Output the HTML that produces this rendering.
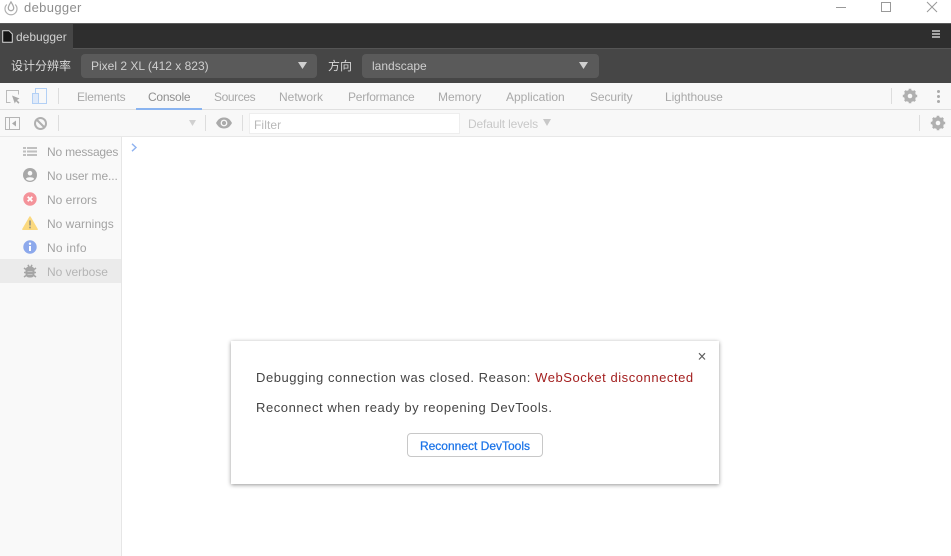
<!DOCTYPE html>
<html><head><meta charset="utf-8">
<style>
html,body{margin:0;padding:0;width:951px;height:556px;overflow:hidden;background:#fff;font-family:"Liberation Sans","Noto Sans CJK SC",sans-serif;}
div,span,svg{position:absolute;}
.t{white-space:nowrap;font-size:12px;line-height:14px;}
.tab{top:90px;color:#a9a9a9;}
.s{left:47px;color:#a3a3a3;}
.sep{width:1px;background:#ddd;}
</style></head><body>
<svg style="left:3px;top:0" width="16" height="16" viewBox="0 0 16 16"><path d="M8 2C6.500 4.300 5.300 6 5.300 8a2.700 2.700 0 0 0 5.400 0C10.700 6 9.500 4.300 8 2z" fill="none" stroke="#a8a8a8" stroke-width="1.300"/><path d="M3.800 4.500a6 6 0 1 0 8.400 0" fill="none" stroke="#b0b0b0" stroke-width="1.200"/></svg>
<div class="t" style="left:24px;top:0;font-size:13px;line-height:16px;color:#8d8d8d;letter-spacing:.35px">debugger</div>
<svg style="left:836px;top:0" width="110" height="16" viewBox="0 0 110 16"><path d="M0 7.500H10" stroke="#999" fill="none"/><rect x="45.500" y="2.500" width="9" height="9" fill="none" stroke="#999"/><path d="M91 2L101 12M101 2L91 12" stroke="#999" fill="none"/></svg>

<div style="left:0;top:23px;width:951px;height:25px;background:#2e2e2e;border-top:1px solid #5a5a5a;box-sizing:border-box"></div>
<div style="left:0;top:48px;width:951px;height:35px;background:#464646;border-top:1px solid #555;box-sizing:border-box"></div>
<div style="left:0;top:24px;width:73px;height:25px;background:#464646"></div>
<svg style="left:2px;top:30px" width="11" height="13" viewBox="0 0 11 13"><path d="M.7.700H7L10.300 4V12.300H.7Z" fill="#141414" stroke="#d5d5d5" stroke-width="1"/></svg>
<div class="t" style="left:16px;top:30px;color:#d2d2d2">debugger</div>
<svg style="left:932px;top:30px" width="9" height="9"><path d="M0 1H8M0 4H8M0 7H8" stroke="#a5a5a5" stroke-width="2"/></svg>

<div class="t" style="left:11px;top:59px;color:#d8d8d8">设计分辨率</div>
<div style="left:81px;top:54px;width:236px;height:24px;border-radius:4px;background:#5a5a5a"></div>
<div class="t" style="left:91px;top:59px;color:#cfcfcf">Pixel 2 XL (412 x 823)</div>
<svg style="left:298px;top:62px" width="10" height="8"><path d="M0 0H9L4.500 7Z" fill="#cfcfcf"/></svg>
<div class="t" style="left:328px;top:59px;color:#d8d8d8">方向</div>
<div style="left:362px;top:54px;width:237px;height:24px;border-radius:4px;background:#5a5a5a"></div>
<div class="t" style="left:372px;top:59px;color:#cfcfcf">landscape</div>
<svg style="left:579px;top:62px" width="10" height="8"><path d="M0 0H9L4.500 7Z" fill="#cfcfcf"/></svg>

<div style="left:0;top:83px;width:951px;height:27px;background:#f8f8f8;border-bottom:1px solid #e0e0e0;box-sizing:border-box"></div>
<div style="left:0;top:110px;width:951px;height:27px;background:#f8f8f8;border-bottom:1px solid #e8e8e8;box-sizing:border-box"></div>
<svg style="left:6px;top:90px" width="14" height="14" viewBox="0 0 14 14"><path d="M4.500 12.500H.5V.5H12.500V4.500" fill="none" stroke="#bbb"/><path d="M6 5.500L13.500 8.500L11 10L13.500 12.500L12.300 13.700L10 11.200L8.800 13.500Z" fill="#aaa"/></svg>
<svg style="left:32px;top:88px" width="16" height="16" viewBox="0 0 16 16"><path d="M3.500 5V.5H14.500V15.500H6.500" fill="none" stroke="#b3d0f5"/><rect x=".5" y="5.500" width="6" height="10" fill="#dfeafa" stroke="#b3d0f5"/></svg>
<div class="sep" style="left:58px;top:88px;height:16px"></div>
<div class="t tab" style="left:77px;letter-spacing:-.2px">Elements</div>
<div class="t tab" style="left:148px;color:#8f8f8f;letter-spacing:-.25px">Console</div>
<div style="left:136px;top:108px;width:66px;height:2px;background:#8ab4f0"></div>
<div class="t tab" style="left:214px;letter-spacing:-.4px">Sources</div>
<div class="t tab" style="left:279px">Network</div>
<div class="t tab" style="left:348px;letter-spacing:-.2px">Performance</div>
<div class="t tab" style="left:438px">Memory</div>
<div class="t tab" style="left:506px">Application</div>
<div class="t tab" style="left:590px;letter-spacing:-.1px">Security</div>
<div class="t tab" style="left:665px;letter-spacing:-.1px">Lighthouse</div>
<div class="sep" style="left:891px;top:88px;height:16px"></div>
<svg style="left:902px;top:88px" width="16" height="16" viewBox="0 0 16 16"><circle cx="8" cy="8" r="4.500" fill="none" stroke="#b0b0b0" stroke-width="3"/><path d="M8 .8V15.200M.8 8H15.200M2.900 2.900L13.100 13.100M13.100 2.900L2.900 13.100" stroke="#b0b0b0" stroke-width="2.600"/><circle cx="8" cy="8" r="2.300" fill="#f8f8f8"/></svg>
<svg style="left:936px;top:89px" width="5" height="15"><circle cx="2.500" cy="2.500" r="1.500" fill="#aaa"/><circle cx="2.500" cy="7.500" r="1.500" fill="#aaa"/><circle cx="2.500" cy="12.500" r="1.500" fill="#aaa"/></svg>

<svg style="left:5px;top:116px" width="15" height="15" viewBox="0 0 15 15"><rect x=".5" y="1.500" width="14" height="12" fill="none" stroke="#b5b5b5"/><path d="M4.500 1.500V13.500" stroke="#b5b5b5"/><path d="M11 4.500V10.500L7 7.500Z" fill="#aaa"/></svg>
<svg style="left:33px;top:116px" width="15" height="15" viewBox="0 0 15 15"><circle cx="7.500" cy="7.500" r="5.500" fill="none" stroke="#b0b0b0" stroke-width="2"/><path d="M3.500 3.500L11.500 11.500" stroke="#b0b0b0" stroke-width="2"/></svg>
<div class="sep" style="left:58px;top:115px;height:16px"></div>
<svg style="left:189px;top:120px" width="8" height="7"><path d="M0 0H7L3.500 6Z" fill="#d0d0d0"/></svg>
<div class="sep" style="left:205px;top:115px;height:16px"></div>
<svg style="left:216px;top:117px" width="16" height="12" viewBox="0 0 16 12"><path d="M0 6C2.500 1.500 5 .5 8 .5S13.500 1.500 16 6C13.500 10.500 11 11.500 8 11.500S2.500 10.500 0 6Z" fill="#aaa"/><circle cx="8" cy="6" r="3.400" fill="#f8f8f8"/><circle cx="8" cy="6" r="2.100" fill="#aaa"/></svg>
<div class="sep" style="left:242px;top:115px;height:16px"></div>
<div style="left:249px;top:113px;width:211px;height:21px;background:#fff;border:1px solid #eee;box-sizing:border-box"></div>
<div class="t" style="left:254px;top:118px;color:#b8b8b8;letter-spacing:.1px">Filter</div>
<div class="t" style="left:468px;top:117px;color:#c8c8c8;letter-spacing:-.15px">Default levels</div>
<svg style="left:543px;top:119px" width="8" height="8"><path d="M0 0H8L4 7Z" fill="#c8c8c8"/></svg>
<div class="sep" style="left:919px;top:115px;height:16px"></div>
<svg style="left:930px;top:115px" width="16" height="16" viewBox="0 0 16 16"><circle cx="8" cy="8" r="4.500" fill="none" stroke="#b0b0b0" stroke-width="3"/><path d="M8 .8V15.200M.8 8H15.200M2.900 2.900L13.100 13.100M13.100 2.900L2.900 13.100" stroke="#b0b0b0" stroke-width="2.600"/><circle cx="8" cy="8" r="2.300" fill="#f8f8f8"/></svg>

<div style="left:0;top:137px;width:122px;height:419px;background:#f9f9f9;border-right:1px solid #e6e6e6;box-sizing:border-box"></div>
<div style="left:0;top:259px;width:121px;height:24px;background:#ebebeb"></div>
<svg style="left:23px;top:147px" width="14" height="9"><path d="M0 1H3M4 1H14M0 4.500H3M4 4.500H14M0 8H3M4 8H14" stroke="#c0c0c0" stroke-width="2"/></svg>
<svg style="left:23px;top:168px" width="14" height="14" viewBox="0 0 14 14"><circle cx="7" cy="7" r="7" fill="#a8a8a8"/><circle cx="7" cy="5.200" r="2.300" fill="#f9f9f9"/><path d="M2.800 11C3.500 8.700 10.500 8.700 11.200 11A6 6 0 0 1 2.800 11Z" fill="#f9f9f9"/></svg>
<svg style="left:23px;top:192px" width="14" height="14" viewBox="0 0 14 14"><circle cx="7" cy="7" r="6.700" fill="#f4939a"/><path d="M4.700 4.700L9.300 9.300M9.300 4.700L4.700 9.300" stroke="#fff" stroke-width="1.800"/></svg>
<svg style="left:22px;top:216px" width="16" height="14" viewBox="0 0 16 14"><path d="M8 1L15.200 13.300H.8Z" fill="#fbd97f" stroke="#fbd97f" stroke-width="1.400" stroke-linejoin="round"/><path d="M8 4.500V9.500" stroke="#a09a80" stroke-width="1.800"/><circle cx="8" cy="11.500" r="1" fill="#a09a80"/></svg>
<svg style="left:23px;top:240px" width="14" height="14" viewBox="0 0 14 14"><circle cx="7" cy="7" r="6.700" fill="#8da9ec"/><path d="M7 6V11" stroke="#fff" stroke-width="2"/><circle cx="7" cy="3.700" r="1.200" fill="#fff"/></svg>
<svg style="left:23px;top:264px" width="14" height="14" viewBox="0 0 14 14"><rect x="2.500" y="2.500" width="9" height="11" rx="3.500" fill="#a5a5a5"/><path d="M1 4L3 5.500M13 4L11 5.500M1 8.500H3M13 8.500H11M1 13L3 11.500M13 13L11 11.500M5 .8L6 2.800M9 .8L8 2.800" stroke="#a5a5a5" stroke-width="1.500"/><path d="M4.500 7.500H9.500M4.500 10.500H9.500" stroke="#cfcfcf" stroke-width=".8"/></svg>
<div class="t s" style="top:145px;letter-spacing:-.2px">No messages</div>
<div class="t s" style="top:169px;letter-spacing:-.1px">No user me...</div>
<div class="t s" style="top:193px">No errors</div>
<div class="t s" style="top:217px">No warnings</div>
<div class="t s" style="top:241px;letter-spacing:.25px">No info</div>
<div class="t s" style="top:265px;color:#b5b5b5;letter-spacing:-.05px">No verbose</div>
<svg style="left:131px;top:143px" width="7" height="9"><path d="M1 .8L5 4.500L1 8.200" fill="none" stroke="#8fb3f0" stroke-width="1.400"/></svg>

<div style="left:231px;top:341px;width:488px;height:143px;background:#fff;box-shadow:0 1px 4px rgba(0,0,0,.42)"></div>
<svg style="left:698px;top:352px" width="8" height="9"><path d="M1 1.200L7 7.500M7 1.200L1 7.500" stroke="#606060" stroke-width="1.200"/></svg>
<div class="t" style="left:256px;top:370px;font-size:13px;line-height:15px;color:#444;letter-spacing:.55px">Debugging connection was closed. Reason: <span style="position:static;color:#a31f1f">WebSocket disconnected</span></div>
<div class="t" style="left:256px;top:400px;font-size:13px;line-height:15px;color:#444;letter-spacing:.56px">Reconnect when ready by reopening DevTools.</div>
<div style="left:407px;top:433px;width:136px;height:24px;border:1px solid #c8c8c8;border-radius:4px;box-sizing:border-box;background:#fff"></div>
<div class="t" style="left:407px;top:439px;width:136px;text-align:center;color:#1a73e8;-webkit-text-stroke:.25px #1a73e8">Reconnect DevTools</div>
</body></html>
